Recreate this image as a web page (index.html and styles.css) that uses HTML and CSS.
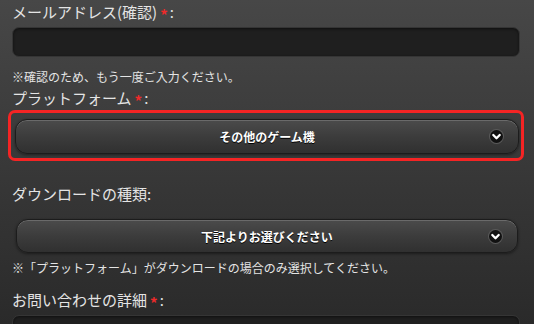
FILE: index.html
```html
<!DOCTYPE html>
<html lang="ja">
<head>
  <meta charset="UTF-8">
  <title>お問い合わせ</title>
  <link rel="stylesheet" href="styles.css">
</head>
<body>
  <form class="form">
    <label class="label label-first">メールアドレス(確認)<span class="req">*</span>:</label>
    <input type="text" class="text-input">
    <p class="note note-first">※確認のため、もう一度ご入力ください。</p>

    <label class="label">プラットフォーム<span class="req">*</span>:</label>
    <div class="highlight">
      <div class="select-btn">
        <span>その他のゲーム機</span>
        <svg class="chevron" width="15" height="15" viewBox="0 0 15 15">
          <circle cx="7.5" cy="7.5" r="7.5" fill="#5a5a5a"/>
          <circle cx="7.5" cy="7.5" r="6.5" fill="#111"/>
          <path d="M4.3 6 L7.5 9.2 L10.7 6" fill="none" stroke="#fff" stroke-width="2.3" stroke-linecap="round" stroke-linejoin="round"/>
        </svg>
      </div>
    </div>

    <label class="label label-gap">ダウンロードの種類:</label>
    <div class="select-btn select-plain">
      <span>下記よりお選びください</span>
      <svg class="chevron" width="15" height="15" viewBox="0 0 15 15">
        <circle cx="7.5" cy="7.5" r="7.5" fill="#5a5a5a"/>
        <circle cx="7.5" cy="7.5" r="6.5" fill="#111"/>
        <path d="M4.3 6 L7.5 9.2 L10.7 6" fill="none" stroke="#fff" stroke-width="2.3" stroke-linecap="round" stroke-linejoin="round"/>
      </svg>
    </div>
    <p class="note note-second">※「プラットフォーム」がダウンロードの場合のみ選択してください。</p>

    <label class="label label-last">お問い合わせの詳細<span class="req">*</span>:</label>
    <div class="text-input text-area"></div>
  </form>
</body>
</html>
```

FILE: styles.css
```css
html, body {
  height: 100%;
}

body {
  margin: 0;
  padding: 0 14px 0 12px;
  background: linear-gradient(180deg, #474747 0%, #3a3a3a 45%, #2a2a2a 100%);
  font-family: "Noto Sans CJK JP", "Noto Sans", sans-serif;
  color: #e4e4e4;
  overflow: hidden;
}

.form {
  display: flex;
  flex-direction: column;
}

.label {
  display: block;
  font-size: 15px;
  line-height: 20px;
  margin-top: 3px;
}

.label-first {
  margin-top: 2px;
}

.label-gap {
  margin-top: 23px;
}

.label-last {
  margin-top: 14px;
}

.req {
  color: #ee2a2a;
  font-size: 15px;
  font-weight: bold;
  line-height: 0;
  vertical-align: -3px;
  margin: 0 2px 0 3px;
}

.text-input {
  display: block;
  box-sizing: border-box;
  width: 100%;
  height: 30px;
  margin: 5px 0 0;
  background: #1f1f1f;
  border: 1px solid #353535;
  border-radius: 7px;
  box-shadow: inset 0 1px 3px rgba(0,0,0,0.5);
}

.text-area {
  height: 40px;
}

.note {
  margin: 0;
  font-size: 12px;
  line-height: 16px;
}

.note-first {
  margin-top: 12px;
}

.note-second {
  margin-top: 7px;
}

.highlight {
  margin: 2px -4px 0;
  border: 3px solid #f52424;
  border-radius: 7px;
  padding: 6px 2px 4px 4px;
}

.select-btn {
  position: relative;
  box-sizing: border-box;
  height: 35px;
  display: flex;
  align-items: center;
  justify-content: center;
  border: 1px solid #1c1c1c;
  border-radius: 12px;
  background: linear-gradient(180deg, #4b4b4b 0%, #3c3c3c 50%, #303030 100%);
  box-shadow: inset 0 1px 0 #6a6a6a, 0 1px 3px rgba(0,0,0,0.45);
  color: #fff;
  font-size: 12px;
  font-weight: bold;
  text-shadow: 0 1px 0 #000;
}

.select-plain {
  height: 34px;
  margin: 15px 2px 0 4px;
}

.chevron {
  position: absolute;
  right: 14px;
  top: 50%;
  margin-top: -7.5px;
}
```
